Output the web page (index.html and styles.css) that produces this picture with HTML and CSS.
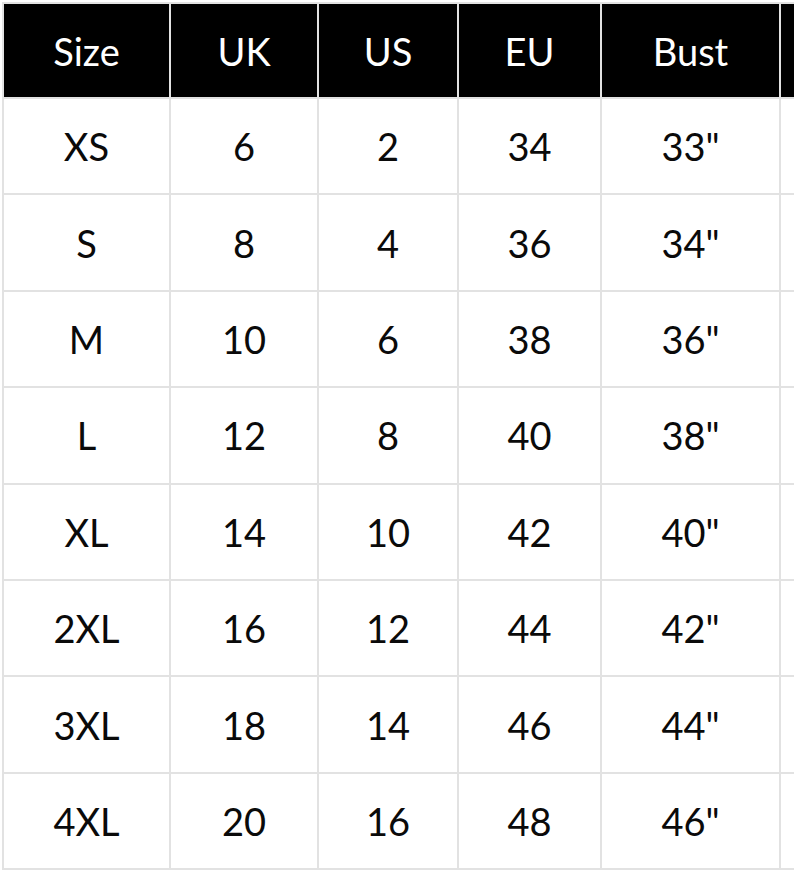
FILE: index.html
```html
<!DOCTYPE html>
<html>
<head>
<meta charset="utf-8">
<link rel="stylesheet" href="styles.css">
</head>
<body>
<table class="chart">
  <colgroup>
    <col class="c1"><col class="c2"><col class="c3"><col class="c4"><col class="c5"><col class="c6">
  </colgroup>
  <thead>
    <tr><th>Size</th><th>UK</th><th>US</th><th>EU</th><th>Bust</th><th></th></tr>
  </thead>
  <tbody>
    <tr><td>XS</td><td>6</td><td>2</td><td>34</td><td>33"</td><td></td></tr>
    <tr><td>S</td><td>8</td><td>4</td><td>36</td><td>34"</td><td></td></tr>
    <tr><td>M</td><td>10</td><td>6</td><td>38</td><td>36"</td><td></td></tr>
    <tr><td>L</td><td>12</td><td>8</td><td>40</td><td>38"</td><td></td></tr>
    <tr><td>XL</td><td>14</td><td>10</td><td>42</td><td>40"</td><td></td></tr>
    <tr><td>2XL</td><td>16</td><td>12</td><td>44</td><td>42"</td><td></td></tr>
    <tr><td>3XL</td><td>18</td><td>14</td><td>46</td><td>44"</td><td></td></tr>
    <tr><td>4XL</td><td>20</td><td>16</td><td>48</td><td>46"</td><td></td></tr>
  </tbody>
</table>
</body>
</html>
```
FILE: styles.css
```css
html, body {
  margin: 0;
  padding: 0;
  overflow: hidden;
  background: #fff;
}
body {
  padding: 2px 0 0 2px;
  width: 1100px;
}
.chart {
  border-collapse: collapse;
  table-layout: fixed;
  width: 957px;
  font-family: Lato, "Open Sans", sans-serif;
  font-size: 38px;
}
.c1 { width: 167px; }
.c2 { width: 148px; }
.c3 { width: 140px; }
.c4 { width: 143px; }
.c5 { width: 179px; }
.c6 { width: 180px; }
.chart th, .chart td {
  border: 2px solid #e2e2e2;
  text-align: center;
  vertical-align: middle;
  padding: 0;
}
.chart th {
  background: #000;
  color: #fff;
  font-weight: 400;
  height: 93px;
}
.chart td {
  color: #0a0a0a;
  height: 94.4px;
}
```
